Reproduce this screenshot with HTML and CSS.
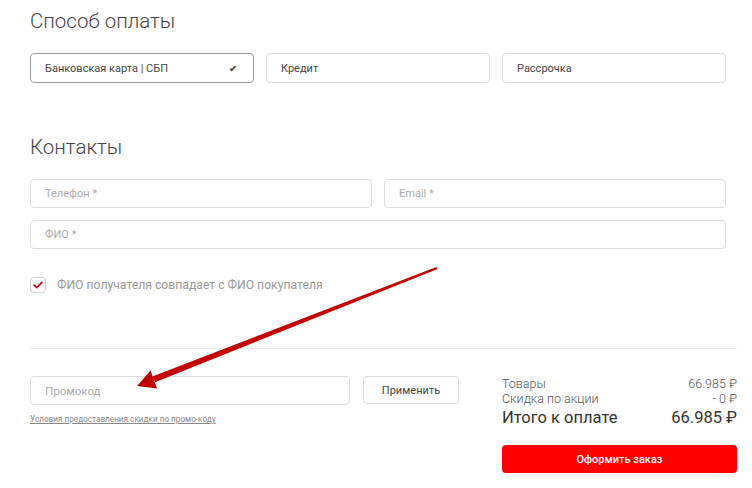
FILE: index.html
```html
<!DOCTYPE html>
<html lang="ru">
<head>
    <meta charset="UTF-8">
    <meta name="viewport" content="width=device-width, initial-scale=1.0">
    <title>Оформление заказа</title>
    <link rel="stylesheet" href="styles.css">
</head>
<body>
    <div class="checkout">
        <section class="section payment">
            <h2 class="section-title">Способ оплаты</h2>
            <div class="pay-options">
                <button class="pay-option active">Банковская карта | СБП <span class="tick">&#10004;</span></button>
                <button class="pay-option">Кредит</button>
                <button class="pay-option">Рассрочка</button>
            </div>
        </section>

        <section class="section contacts">
            <h2 class="section-title">Контакты</h2>
            <div class="form-row">
                <input type="text" class="field" placeholder="Телефон *">
                <input type="text" class="field" placeholder="Email *">
            </div>
            <div class="form-row">
                <input type="text" class="field" placeholder="ФИО *">
            </div>
            <label class="check">
                <span class="check-box">
                    <svg width="10" height="8" viewBox="0 0 10 8"><path d="M1.2 4.2 L3.8 6.6 L8.8 1.4" fill="none" stroke="#e3001b" stroke-width="1.8" stroke-linecap="round" stroke-linejoin="round"/></svg>
                </span>
                ФИО получателя совпадает с ФИО покупателя
            </label>
        </section>

        <div class="bottom">
            <div class="promo">
                <div class="promo-row">
                    <input type="text" class="field promo-field" placeholder="Промокод">
                    <button class="apply-btn">Применить</button>
                </div>
                <a href="#" class="promo-link">Условия предоставления скидки по промо-коду</a>
            </div>
            <div class="summary">
                <div class="sum-line"><span>Товары</span><span>66.985 &#8381;</span></div>
                <div class="sum-line"><span>Скидка по акции</span><span>- 0 &#8381;</span></div>
                <div class="sum-total"><span>Итого к оплате</span><span>66.985 &#8381;</span></div>
                <button class="order-btn">Оформить заказ</button>
            </div>
        </div>
    </div>

    <svg class="arrow" width="752" height="488" viewBox="0 0 752 488">
        <polygon points="155,382.2 437.6,268.9 436.4,266.9 152.4,376.4" fill="#c40000"/>
        <polygon points="137,386 157,388.5 150.5,370.5" fill="#c40000"/>
    </svg>
</body>
</html>
```

FILE: styles.css
```css
* {
    margin: 0;
    padding: 0;
    box-sizing: border-box;
    font-family: Roboto, "Noto Sans", Arial, sans-serif;
}

body {
    background: #fff;
    color: #333;
    width: 752px;
    height: 488px;
    overflow: hidden;
    position: relative;
}

.checkout {
    padding: 7px 0 0 30px;
}

.section-title {
    font-size: 20.5px;
    font-weight: 300;
    color: #444;
    line-height: 28px;
}

.pay-options {
    display: flex;
    gap: 12px;
    width: 696px;
    margin-top: 18px;
}

.pay-option {
    flex: 1;
    height: 30px;
    background: #fff;
    border: 1px solid #d9d9d9;
    border-radius: 4px;
    text-align: left;
    padding: 0 14px;
    font-size: 11px;
    color: #444;
    display: flex;
    align-items: center;
    justify-content: space-between;
}

.pay-option.active {
    border-color: #999;
}

.tick {
    font-size: 10px;
    color: #333;
    padding-right: 2px;
}

.contacts {
    margin-top: 50px;
}

.form-row {
    display: flex;
    gap: 12px;
    width: 696px;
    margin-top: 12px;
}

.contacts .section-title + .form-row {
    margin-top: 18px;
}

.field {
    flex: 1;
    height: 29px;
    border: 1px solid #dcdcdc;
    border-radius: 4px;
    padding: 0 14px;
    font-size: 11px;
    color: #333;
    outline: none;
}

.field::placeholder {
    color: #aaa;
}

.check {
    display: flex;
    align-items: center;
    gap: 11px;
    margin-top: 28px;
    font-size: 12.2px;
    color: #999;
}

.check-box {
    width: 16px;
    height: 16px;
    border: 1px solid #ccc;
    border-radius: 4px;
    display: flex;
    align-items: center;
    justify-content: center;
}

.bottom {
    display: flex;
    justify-content: space-between;
    width: 707px;
    margin-top: 55px;
    padding-top: 27px;
    border-top: 1px solid #ebebeb;
}

.promo {
    width: 429px;
}

.promo-row {
    display: flex;
    gap: 13px;
}

.promo-field {
    flex: none;
    width: 320px;
    height: 29px;
    font-size: 11.5px;
}

.apply-btn {
    width: 96px;
    height: 28px;
    background: #fff;
    border: 1px solid #d9d9d9;
    border-radius: 4px;
    font-size: 11px;
    color: #444;
}

.promo-link {
    display: block;
    margin-top: 9px;
    font-size: 8.2px;
    color: #888;
}

.summary {
    width: 235px;
}

.sum-line {
    display: flex;
    justify-content: space-between;
    font-size: 12.5px;
    font-weight: 300;
    color: #555;
    line-height: 15px;
}

.sum-total {
    display: flex;
    justify-content: space-between;
    font-size: 16.5px;
    color: #333;
    line-height: 22px;
    margin-top: 1px;
}

.order-btn {
    display: block;
    width: 100%;
    height: 28px;
    margin-top: 16px;
    background: #ff0000;
    border: none;
    border-radius: 4px;
    color: #fff;
    font-size: 11px;
    font-weight: 500;
}

.arrow {
    position: absolute;
    left: 0;
    top: 0;
    pointer-events: none;
}
```
